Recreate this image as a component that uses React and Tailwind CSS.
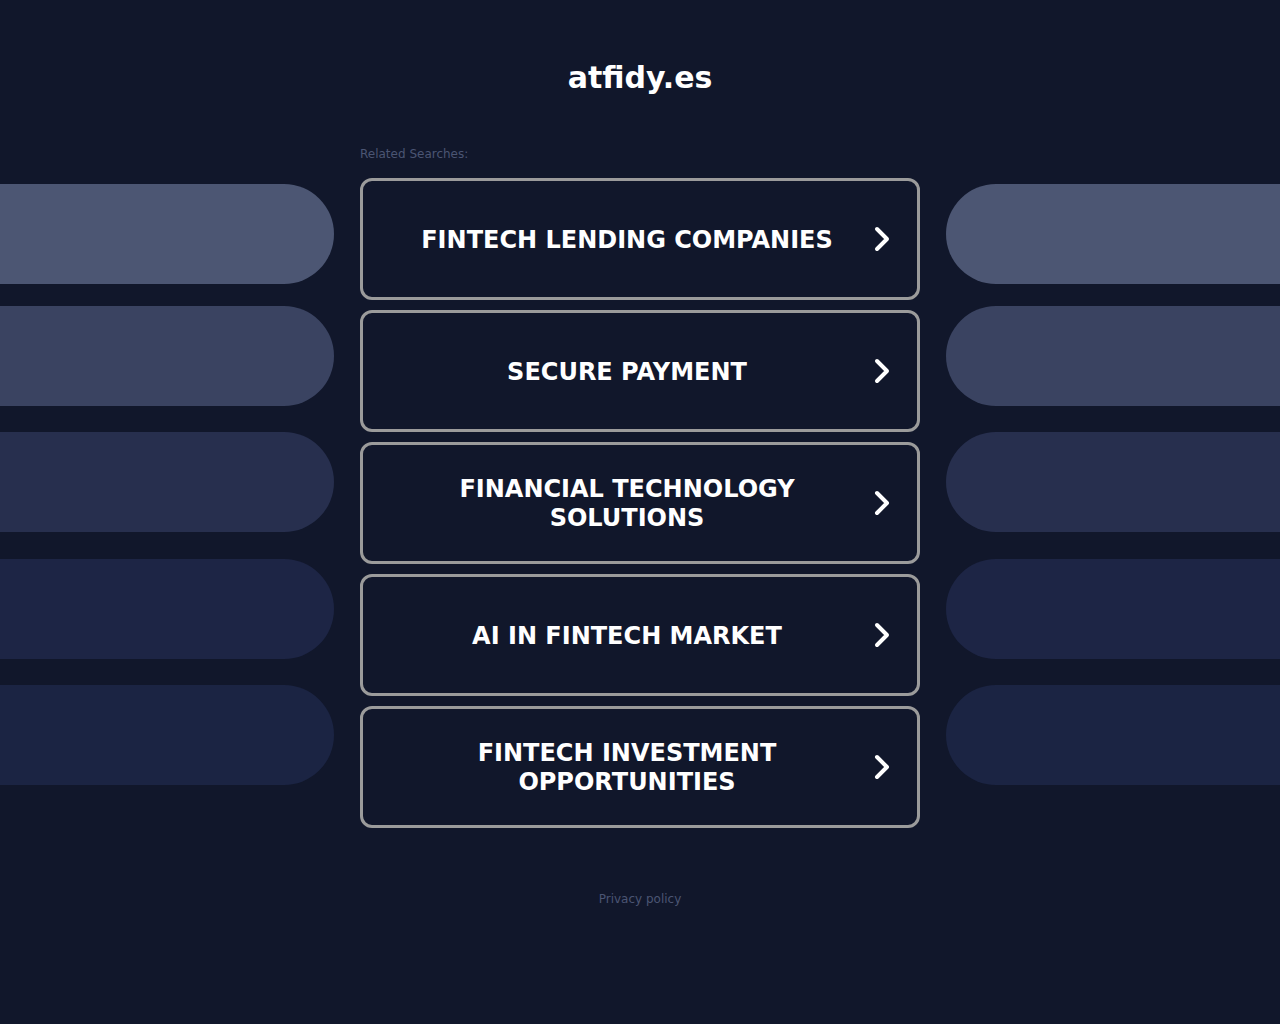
import React from 'react';

const searches = [
  'FINTECH LENDING COMPANIES',
  'SECURE PAYMENT',
  'FINANCIAL TECHNOLOGY SOLUTIONS',
  'AI IN FINTECH MARKET',
  'FINTECH INVESTMENT OPPORTUNITIES',
];

function Chevron() {
  return (
    <svg className="w-[26px] h-[30px] shrink-0" viewBox="0 0 26 30" fill="none">
      <path d="M8 5l10 10-10 10" stroke="#ffffff" strokeWidth="4" strokeLinecap="round" strokeLinejoin="round" />
    </svg>
  );
}

function Pills({ side }) {
  const round = side === 'left' ? 'rounded-r-[50px]' : 'rounded-l-[50px]';
  return (
    <div className="flex flex-col pt-[39px]">
      <div className={`h-[100px] bg-[#4c5673] ${round}`}></div>
      <div className={`h-[100px] mt-[22px] bg-[#3a4361] ${round}`}></div>
      <div className={`h-[100px] mt-[26px] bg-[#272f4e] ${round}`}></div>
      <div className={`h-[100px] mt-[27px] bg-[#1d2545] ${round}`}></div>
      <div className={`h-[100px] mt-[26px] bg-[#1b2443] ${round}`}></div>
    </div>
  );
}

export default function App() {
  return (
    <div className="min-h-screen bg-[#11172b] font-['DejaVu_Sans',sans-serif] overflow-hidden">
      <h1 className="pt-[60px] text-center text-white font-bold text-[30px] leading-[36px]">atfidy.es</h1>

      <div className="flex items-start mt-[49px]">
        <div className="w-[334px] shrink-0">
          <Pills side="left" />
        </div>

        <div className="w-[560px] shrink-0 ml-[26px]">
          <p className="pt-[1px] text-[12px] leading-[16px] text-[#4b5573] mb-[16px]">Related Searches:</p>
          <div className="flex flex-col gap-[10px]">
            {searches.map((s) => (
              <a
                key={s}
                href="#"
                className="h-[122px] flex items-center border-[3px] border-[#9b9b9b] rounded-[12px] pl-[22px] pr-[22px]"
              >
                <span className="flex-1 pt-[2px] text-center text-white font-bold text-[24px] leading-[29px]">
                  {s}
                </span>
                <Chevron />
              </a>
            ))}
          </div>
        </div>

        <div className="flex-1 ml-[26px]">
          <Pills side="right" />
        </div>
      </div>

      <div className="mt-[58px] text-center">
        <a href="#" className="text-[12px] leading-[16px] text-[#4b5573]">Privacy policy</a>
      </div>
    </div>
  );
}
